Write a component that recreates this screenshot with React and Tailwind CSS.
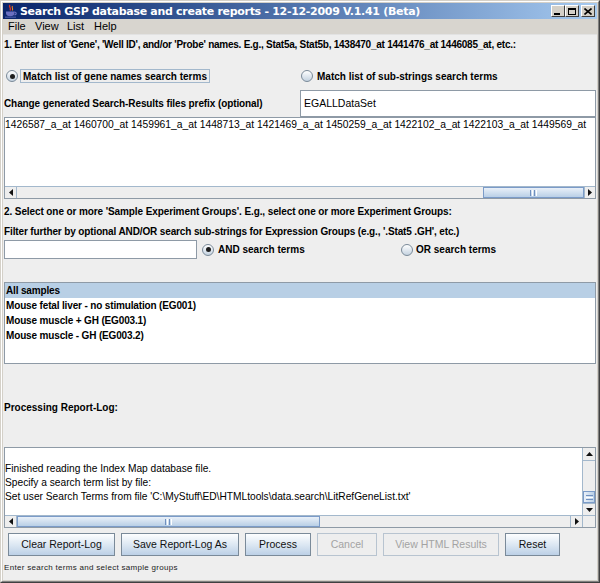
import React from "react";

function Radio({ checked }) {
  return (
    <span className="inline-flex shrink-0 w-[12px] h-[12px] rounded-full border border-[#7a8a99] bg-linear-to-b from-white to-[#c4d2e0] items-center justify-center">
      {checked && <span className="w-[5px] h-[5px] rounded-full bg-[#1e1e1e]" />}
    </span>
  );
}

function Arrow({ dir }) {
  const d = {
    left: "M4 0 L0 3.5 L4 7Z",
    right: "M0 0 L4 3.5 L0 7Z",
    up: "M0 4 L3.5 0 L7 4Z",
    down: "M0 0 L3.5 4 L7 0Z",
  }[dir];
  const horiz = dir === "left" || dir === "right";
  return (
    <svg width={horiz ? 4 : 7} height={horiz ? 7 : 4} viewBox={horiz ? "0 0 4 7" : "0 0 7 4"}>
      <path d={d} fill="#111" />
    </svg>
  );
}

function HGrip() {
  return (
    <div className="flex gap-[1px] h-[6px]">
      <span className="w-[1px] h-full bg-[#6f8fbf]" />
      <span className="w-[1px] h-full bg-white" />
      <span className="w-[1px] h-full bg-[#6f8fbf]" />
      <span className="w-[1px] h-full bg-white" />
    </div>
  );
}

function VGrip() {
  return (
    <div className="flex flex-col gap-[1px] w-[7px]">
      <span className="h-[1px] w-full bg-[#6f8fbf]" />
      <span className="h-[1px] w-full bg-white" />
      <span className="h-[1px] w-full bg-[#6f8fbf]" />
    </div>
  );
}

function Btn({ children, w, disabled }) {
  return (
    <div
      className={
        disabled
          ? "h-full flex items-center justify-center border border-[#b8c4d0] bg-[#eeeeee] text-[#a3a3a3] text-[10.5px]"
          : "h-full flex items-center justify-center border border-[#7a8a99] bg-linear-to-b from-[#fdfeff] via-[#dde8f3] to-[#bcd0e6] text-[10.5px] text-[#111]"
      }
      style={{ width: w }}
    >
      {children}
    </div>
  );
}

function TitleBtn({ children, extra }) {
  return (
    <div className={"w-[14px] h-[12px] bg-[#d4d0c8] border border-t-white border-l-white border-r-[#404040] border-b-[#404040] flex items-center justify-center " + (extra || "")}>
      {children}
    </div>
  );
}

export default function App() {
  return (
    <div className="w-[600px] h-[583px] font-['Liberation_Sans',Arial,sans-serif] text-black">
      <div className="w-full h-full border border-t-[#d4d0c8] border-l-[#d4d0c8] border-r-[#404040] border-b-[#404040] bg-[#d4d0c8]">
        <div className="w-full h-full border border-t-white border-l-white border-r-[#808080] border-b-[#808080] p-[1px] flex flex-col">
          {/* Title bar */}
          <div className="h-[16px] shrink-0 bg-linear-to-r from-[#0a246a] to-[#a6caf0] flex items-center pl-[1px] pr-[2px]">
            <svg width="14" height="14" viewBox="0 0 14 14" className="shrink-0">
              <path d="M6 1 C4 3 8 4 6 6.5" stroke="#e2301e" fill="none" strokeWidth="1.4" />
              <path d="M8.5 2 C7.2 3.5 9.5 4.2 8.3 6.5" stroke="#f08020" fill="none" strokeWidth="1.1" />
              <path d="M2 7.5 h8.5 v1.5 c0 2.2 -1.8 3.3 -4.2 3.3 c-2.5 0 -4.3 -1.1 -4.3 -3.3z" fill="#6a6fc0" />
              <path d="M10.4 8.2 c2.4 0 2.4 2.6 0 2.6" stroke="#6a6fc0" fill="none" strokeWidth="1.2" />
              <path d="M1 13.2 h11" stroke="#4a5aa8" strokeWidth="1.2" />
            </svg>
            <span className="ml-[2px] text-white font-bold text-[11px] font-['DejaVu_Sans',sans-serif] tracking-[-0.3px] leading-none whitespace-nowrap">
              Search GSP database and create reports - 12-12-2009 V.1.41 (Beta)
            </span>
            <div className="flex-1" />
            <TitleBtn>
              <span className="w-[6px] h-[2px] bg-black mt-[5px] mr-[2px]" />
            </TitleBtn>
            <TitleBtn>
              <span className="w-[8px] h-[7px] border border-black border-t-2" />
            </TitleBtn>
            <TitleBtn extra="ml-[2px]">
              <svg width="8" height="7" viewBox="0 0 8 7">
                <path d="M0.5 0.5 L7.5 6.5 M7.5 0.5 L0.5 6.5" stroke="#000" strokeWidth="1.6" />
              </svg>
            </TitleBtn>
          </div>

          {/* Menu bar */}
          <div className="h-[15px] shrink-0 bg-[#d8d5cf] flex items-center pl-[5px] text-[11px] leading-none">
            <span className="w-[27px]">File</span>
            <span className="w-[32px]">View</span>
            <span className="w-[27px]">List</span>
            <span>Help</span>
          </div>

          {/* Content */}
          <div className="flex-1 bg-[#eeeeee] flex flex-col px-[1px] border-t border-[#e2e2e2]">
            <div className="h-[19px] flex items-center font-bold text-[10px] tracking-[-0.25px] whitespace-nowrap">
              1. Enter list of 'Gene', 'Well ID', and/or 'Probe' names. E.g., Stat5a, Stat5b, 1438470_at 1441476_at 1446085_at, etc.:
            </div>

            <div className="mt-[15px] h-[14px] flex items-center">
              <div className="w-[296px] flex items-center pl-[2px]">
                <Radio checked />
                <span className="ml-[2px] h-[14px] px-[2px] flex items-center border border-[#a3b8cc] font-bold text-[10px] whitespace-nowrap">
                  Match list of gene names search terms
                </span>
              </div>
              <div className="flex items-center pl-[1px]">
                <Radio />
                <span className="ml-[4px] font-bold text-[10px] whitespace-nowrap">Match list of sub-strings search terms</span>
              </div>
            </div>

            <div className="mt-[7px] h-[27px] flex items-center">
              <div className="w-[296px] font-bold text-[10px] tracking-[-0.1px] whitespace-nowrap">
                Change generated Search-Results files prefix (optional)
              </div>
              <div className="flex-1 h-full bg-white border border-[#8e9aa6] flex items-center pl-[3px] text-[10.5px]">
                EGALLDataSet
              </div>
            </div>

            {/* text area */}
            <div className="h-[82px] bg-white border border-[#8e9aa6] flex flex-col">
              <div className="flex-1 text-[10.3px] leading-[14px] whitespace-nowrap overflow-hidden">
                1426587_a_at 1460700_at 1459961_a_at 1448713_at 1421469_a_at 1450259_a_at 1422102_a_at 1422103_a_at 1449569_at
              </div>
              <div className="h-[12px] flex bg-[#eeeeee] border-t border-[#a3b8cc]">
                <div className="w-[12px] flex items-center justify-center border-r border-[#a3b8cc]">
                  <Arrow dir="left" />
                </div>
                <div className="flex-1 flex justify-end">
                  <div className="w-[101px] h-full border border-[#7b9bc8] bg-linear-to-b from-[#e9f0f8] to-[#b9cfe6] flex items-center justify-center">
                    <HGrip />
                  </div>
                </div>
                <div className="w-[11px] flex items-center justify-center border-l border-[#a3b8cc]">
                  <Arrow dir="right" />
                </div>
              </div>
            </div>

            <div className="h-[24px] flex items-center font-bold text-[10px] tracking-[-0.1px] whitespace-nowrap">
              2. Select one or more 'Sample Experiment Groups'. E.g., select one or more Experiment Groups:
            </div>
            <div className="h-[17px] flex items-center font-bold text-[10px] tracking-[-0.13px] whitespace-nowrap">
              Filter further by optional AND/OR search sub-strings for Expression Groups (e.g., '.Stat5 .GH', etc.)
            </div>

            <div className="h-[19px] flex items-center">
              <div className="w-[193px] h-full bg-white border border-[#8e9aa6]" />
              <div className="ml-[5px] w-[199px] flex items-center">
                <Radio checked />
                <span className="ml-[4px] font-bold text-[10px] whitespace-nowrap">AND search terms</span>
              </div>
              <div className="flex items-center">
                <Radio />
                <span className="ml-[3px] font-bold text-[10px] whitespace-nowrap">OR search terms</span>
              </div>
            </div>

            {/* list */}
            <div className="mt-[23px] h-[82px] bg-white border border-[#8e9aa6] flex flex-col font-bold text-[10px] tracking-[-0.15px]">
              <div className="h-[15px] bg-[#b8cfe5] flex items-center pl-[1px]">All samples</div>
              <div className="h-[15px] flex items-center pl-[1px]">Mouse fetal liver - no stimulation (EG001)</div>
              <div className="h-[15px] flex items-center pl-[1px]">Mouse muscle + GH (EG003.1)</div>
              <div className="h-[15px] flex items-center pl-[1px]">Mouse muscle - GH (EG003.2)</div>
            </div>

            <div className="mt-[34px] h-[18px] flex items-center font-bold text-[10px]">Processing Report-Log:</div>

            {/* log */}
            <div className="mt-[31px] h-[81px] bg-white border border-[#8e9aa6] flex flex-col">
              <div className="flex-1 flex min-h-0">
                <div className="flex-1 pt-[14px] text-[10.2px] leading-[14px] whitespace-nowrap overflow-hidden">
                  <div>Finished reading the Index Map database file.</div>
                  <div>Specify a search term list by file:</div>
                  <div>Set user Search Terms from file 'C:\MyStuff\ED\HTMLtools\data.search\LitRefGeneList.txt'</div>
                </div>
                <div className="w-[13px] flex flex-col bg-[#eeeeee] border-l border-[#a3b8cc]">
                  <div className="h-[13px] flex items-center justify-center border-b border-[#a3b8cc]">
                    <Arrow dir="up" />
                  </div>
                  <div className="flex-1 flex flex-col justify-end">
                    <div className="h-[12px] border border-[#7b9bc8] bg-linear-to-r from-[#e9f0f8] to-[#b9cfe6] flex items-center justify-center">
                      <VGrip />
                    </div>
                  </div>
                  <div className="h-[12px] flex items-center justify-center border-t border-[#a3b8cc]">
                    <Arrow dir="down" />
                  </div>
                </div>
              </div>
              <div className="h-[12px] flex bg-[#eeeeee] border-t border-[#a3b8cc]">
                <div className="w-[12px] flex items-center justify-center border-r border-[#a3b8cc]">
                  <Arrow dir="left" />
                </div>
                <div className="w-[303px] h-full border border-[#7b9bc8] bg-linear-to-b from-[#e9f0f8] to-[#b9cfe6] flex items-center justify-center">
                  <HGrip />
                </div>
                <div className="flex-1" />
                <div className="w-[12px] flex items-center justify-center border-l border-[#a3b8cc]">
                  <Arrow dir="right" />
                </div>
                <div className="w-[13px] border-l border-[#a3b8cc] bg-[#eeeeee]" />
              </div>
            </div>

            {/* buttons */}
            <div className="mt-[5px] h-[23px] flex gap-[6px] pl-[4px]">
              <Btn w={107}>Clear Report-Log</Btn>
              <Btn w={118}>Save Report-Log As</Btn>
              <Btn w={66}>Process</Btn>
              <Btn w={60} disabled>Cancel</Btn>
              <Btn w={116} disabled>View HTML Results</Btn>
              <Btn w={55}>Reset</Btn>
            </div>

            <div className="mt-[5px] h-[14px] flex items-center text-[8px] tracking-[0.3px] text-[#222] whitespace-nowrap">
              Enter search terms and select sample groups
            </div>
          </div>
        </div>
      </div>
    </div>
  );
}
